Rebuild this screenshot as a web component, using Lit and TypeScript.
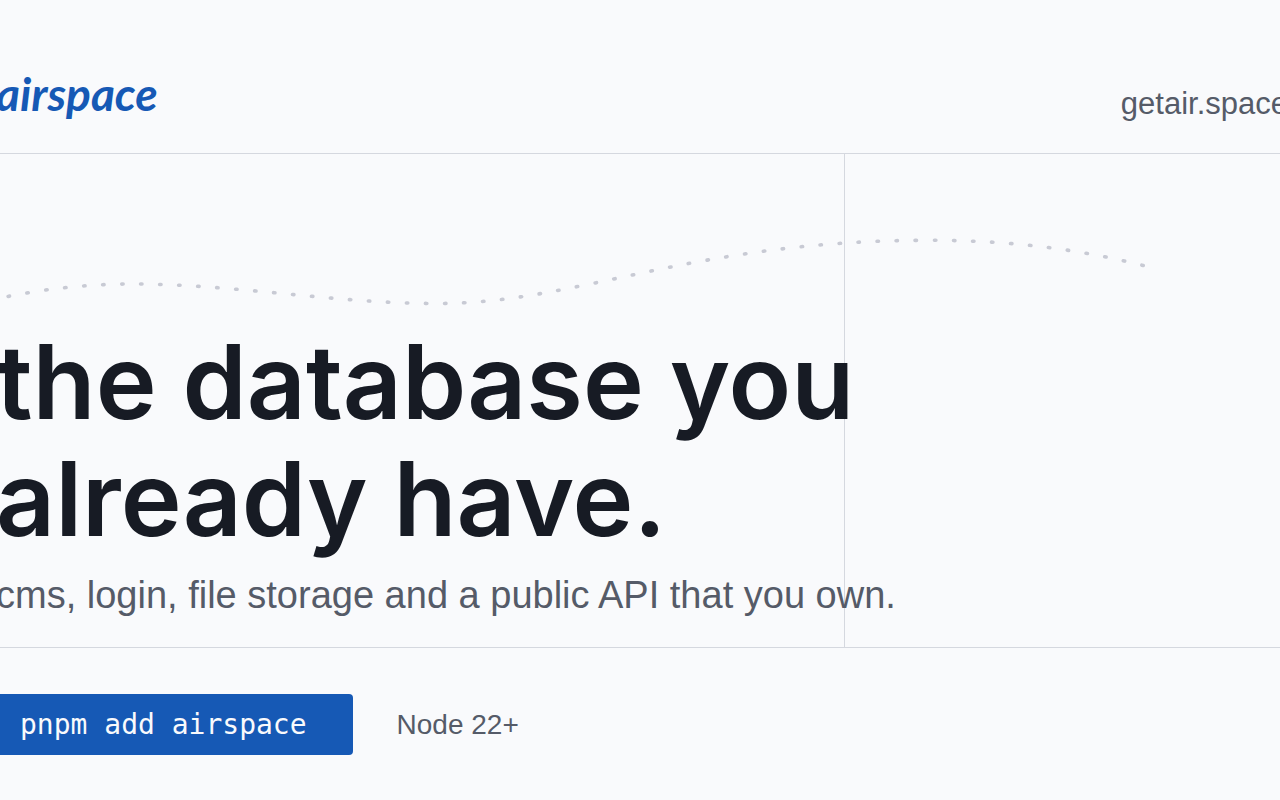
import { LitElement, html, css } from "lit";
import { customElement } from "lit/decorators.js";

@customElement("app-root")
export class AppRoot extends LitElement {
  static styles = css`
    :host {
      display: block;
      min-height: 100vh;
      overflow: hidden;
      background: #f9fafc;
      color: #171b24;
      font-family: "Liberation Sans", sans-serif;
    }
    .card {
      display: flex;
      flex-direction: column;
      min-height: 100vh;
      margin: 0 -16px;
    }
    .header {
      display: flex;
      align-items: flex-end;
      justify-content: space-between;
      box-sizing: border-box;
      height: 154px;
      padding: 0 8px 28px 12px;
      border-bottom: 1px solid #d5d8df;
    }
    .logo {
      padding-bottom: 7px;
      color: #1659b5;
      font: italic 700 46px/48px Lato, sans-serif;
      text-decoration: none;
    }
    .site {
      color: #555b68;
      font-size: 31px;
      line-height: 42px;
      text-decoration: none;
    }
    .hero {
      position: relative;
      padding: 169px 16px 28px 12px;
      border-bottom: 1px solid #d5d8df;
    }
    .hero::before {
      content: "";
      position: absolute;
      top: 0;
      bottom: 0;
      left: calc(66% - 6px);
      border-left: 1px solid #d5d8df;
    }
    .trail {
      position: absolute;
      top: 66px;
      left: 0;
      width: 1200px;
      height: 100px;
    }
    .title {
      position: relative;
      margin: 0;
      font-family: Inter, sans-serif;
      font-size: 103px;
      font-weight: 600;
      line-height: 117px;
    }
    .line {
      display: block;
      white-space: nowrap;
    }
    .lead {
      position: relative;
      margin: 14px 0 0;
      color: #555b68;
      font-size: 38px;
      line-height: 48px;
      white-space: nowrap;
    }
    .footer {
      display: flex;
      align-items: center;
      gap: 44px;
      padding: 46px 0;
    }
    .command {
      height: 61px;
      padding: 0 46px 0 36px;
      border: 0;
      border-radius: 4px;
      background: #1659b5;
      color: #f9fafc;
      font: 28px/40px "DejaVu Sans Mono", monospace;
    }
    .note {
      color: #555b68;
      font-size: 28px;
      line-height: 40px;
    }
  `;

  render() {
    return html`
      <div class="card">
        <header class="header">
          <a class="logo" href="#">airspace</a>
          <a class="site" href="#">getair.space</a>
        </header>
        <main class="hero">
          <svg class="trail" viewBox="-16 220 1200 100" aria-hidden="true">
            <path
              d="M-10.500 300.500C38 289 88 284 132 284C235 284 335 303.500 437 303.500C580 303.500 690 240.300 929 240.300C1010 240.300 1080 249 1149 267"
              fill="none"
              stroke="#c8cad4"
              stroke-width="3.600"
              stroke-linecap="round"
              stroke-dasharray="1.400 17.640"
            />
          </svg>
          <h1 class="title">
            <span class="line">the database you</span>
            <span class="line">already have.</span>
          </h1>
          <p class="lead">cms, login, file storage and a public API that you own.</p>
        </main>
        <footer class="footer">
          <button class="command" type="button">pnpm add airspace</button>
          <span class="note">Node 22+</span>
        </footer>
      </div>
    `;
  }
}
